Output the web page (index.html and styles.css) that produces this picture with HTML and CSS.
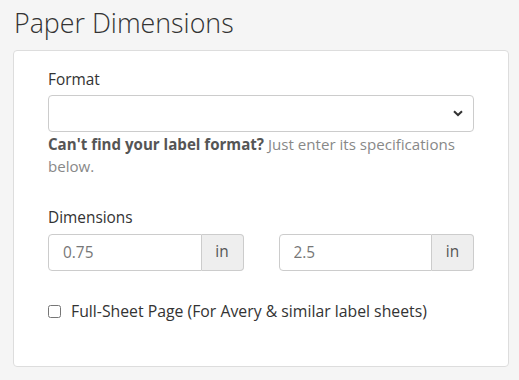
FILE: index.html
```html
<!DOCTYPE html>
<html lang="en">
<head>
    <meta charset="UTF-8">
    <meta name="viewport" content="width=device-width, initial-scale=1.0">
    <title>Paper Dimensions</title>
    <link rel="stylesheet" href="styles.css">
</head>
<body>

    <h2 class="title">Paper Dimensions</h2>

    <div class="panel">
        <div class="form-group">
            <label for="format">Format</label>
            <div class="select-wrap">
                <select id="format" class="form-control"></select>
                <svg class="chevron" width="10" height="7" viewBox="0 0 10 7">
                    <path d="M1 1.2 L5 5 L9 1.2" fill="none" stroke="#333" stroke-width="2"/>
                </svg>
            </div>
            <p class="help"><strong>Can't find your label format?</strong> Just enter its specifications below.</p>
        </div>

        <div class="form-group dims">
            <label>Dimensions</label>
            <div class="dim-row">
                <div class="input-group">
                    <input type="text" class="form-control" value="0.75">
                    <span class="addon">in</span>
                </div>
                <div class="input-group">
                    <input type="text" class="form-control" value="2.5">
                    <span class="addon">in</span>
                </div>
            </div>
        </div>

        <label class="check">
            <input type="checkbox">
            <span>Full-Sheet Page (For Avery &amp; similar label sheets)</span>
        </label>
    </div>

</body>
</html>
```

FILE: styles.css
```css
* {
    margin: 0;
    padding: 0;
    box-sizing: border-box;
    font-family: 'Open Sans', sans-serif;
}
body {
    background-color: #f5f5f5;
    padding: 0 10px 0 13px;
    color: #333;
    font-size: 15.4px;
    line-height: 21.4px;
}
.title {
    font-size: 26.8px;
    font-weight: 300;
    line-height: 36px;
    margin: 5px 0 9px 1px;
    color: #333;
}
.panel {
    background: white;
    border: 1px solid #ddd;
    border-radius: 4px;
    padding: 18px 34px 44px;
}
label {
    display: block;
    font-weight: 400;
    margin-bottom: 5px;
}
.form-control {
    display: block;
    width: 100%;
    height: 37px;
    font-size: 15.4px;
    color: #777;
    background: white;
    border: 1px solid #ccc;
    border-radius: 4px;
    padding: 6px 14px;
    outline: none;
}
.select-wrap {
    position: relative;
}
.select-wrap select {
    appearance: none;
    -webkit-appearance: none;
}
.chevron {
    position: absolute;
    right: 11px;
    top: 15px;
}
.help {
    margin-top: 2px;
    color: #888;
    font-size: 15.1px;
}
.help strong {
    color: #555;
    font-weight: 700;
}
.dims {
    margin-top: 30px;
}
.dim-row {
    display: flex;
    gap: 35px;
}
.input-group {
    flex: 1;
    display: flex;
}
.input-group .form-control {
    border-radius: 4px 0 0 4px;
    flex: 1;
    min-width: 0;
}
.addon {
    width: 42px;
    height: 37px;
    display: flex;
    align-items: center;
    justify-content: center;
    background: #eee;
    color: #555;
    border: 1px solid #ccc;
    border-left: none;
    border-radius: 0 4px 4px 0;
}
.check {
    display: flex;
    align-items: center;
    gap: 10px;
    margin-top: 30px;
    margin-bottom: 0;
    font-size: 15.8px;
}
.check input {
    width: 13px;
    height: 13px;
    margin: 0;
}
```
